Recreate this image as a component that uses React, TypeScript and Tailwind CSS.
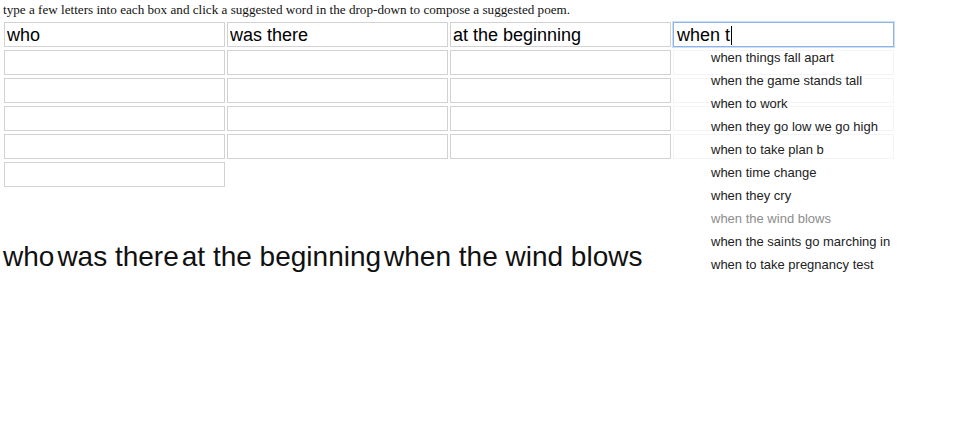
const rows = [
  ["who", "was there", "at the beginning", "when t"],
  ["", "", "", ""],
  ["", "", "", ""],
  ["", "", "", ""],
  ["", "", "", ""],
  [""],
]

const suggestions = [
  "when things fall apart",
  "when the game stands tall",
  "when to work",
  "when they go low we go high",
  "when to take plan b",
  "when time change",
  "when they cry",
  "when the wind blows",
  "when the saints go marching in",
  "when to take pregnancy test",
]

const poem = ["who", "was there", "at the beginning", "when the wind blows"]

function Suggestions() {
  return (
    <ul className="absolute left-[1px] top-[24px] w-[223px] pl-[37px] text-[13px] leading-[23px] text-[#222]">
      {suggestions.map((s, i) => (
        <li key={i} className={i === 7 ? "text-[#8c8c8c]" : ""}>
          {s}
        </li>
      ))}
    </ul>
  )
}

export default function App() {
  return (
    <div className="min-h-[439px] bg-white font-['Liberation_Sans',Arial,sans-serif] text-black">
      <p className="pl-[3px] pt-[2px] font-['Liberation_Serif','Times_New_Roman',serif] text-[13.15px] leading-[15px] text-[#111]">
        type a few letters into each box and click a suggested word in the drop-down to compose a suggested poem.
      </p>

      <div className="mt-[5px] grid grid-cols-[repeat(4,221px)] gap-x-[2px] gap-y-[3px] pl-[4px]">
        {rows.map((row, r) =>
          row.map((val, c) => {
            if (r === 0 && c === 3) {
              return (
                <div key={`${r}-${c}`} className="relative">
                  <div className="flex h-[25px] items-center border border-[#8cb4e6] px-[3px] pt-[1px] text-[18px] leading-[23px] shadow-[0_0_0_1px_#cfe0f6]">
                    <span>{val}</span>
                    <span className="ml-[1px] h-[19px] w-[1px] bg-black" />
                  </div>
                  <Suggestions />
                </div>
              )
            }
            const faint = c === 3 && r > 0
            return (
              <input
                key={`${r}-${c}`}
                readOnly
                value={val}
                className={`h-[25px] border px-[2px] pt-[1px] text-[18px] leading-[23px] outline-none ${
                  faint ? "border-[#f4f4f4]" : "border-[#d2d2d2]"
                }`}
              />
            )
          })
        )}
      </div>

      <div className="mt-[54px] flex gap-[3px] pl-[3px] text-[28px] leading-[32px] text-[#111]">
        {poem.map((w, i) => (
          <span key={i}>{w}</span>
        ))}
      </div>
    </div>
  )
}
